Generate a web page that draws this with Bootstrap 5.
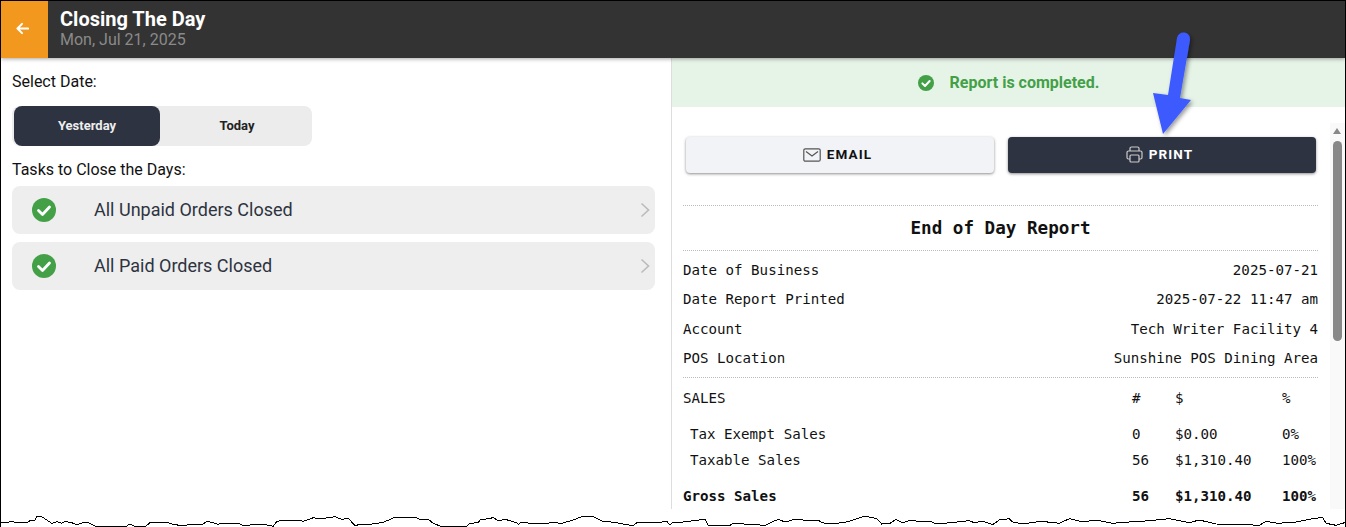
<!DOCTYPE html>
<html lang="en">
<head>
  <meta charset="UTF-8">
  <title>Closing The Day</title>
  <link href="https://cdn.jsdelivr.net/npm/bootstrap@5.3.3/dist/css/bootstrap.min.css" rel="stylesheet">
  <style>
    html, body { height: 100%; overflow: hidden; }
    body { font-family: Roboto, sans-serif; background: #fff; color: #111; }
    .shot { position: relative; height: 527px; border: 1px solid #000; border-bottom: 0; overflow: hidden; }
    .top-bar { height: 57px; background: #333; box-shadow: 0 1px 4px rgba(0,0,0,.35); position: relative; z-index: 2; }
    .back-btn { width: 47px; background: #f3981f; padding: 0 5px 2px 0; }
    .top-heading { margin: 7px 0 0 12px; }
    .top-title { font-size: 20px; font-weight: 700; line-height: 22px; color: #fff; }
    .top-date { font-size: 16px; line-height: 19px; color: #8a8a8a; }
    .left-pane { width: 670px; padding: 14px 11px 0; }
    .pane-label { font-size: 16px; line-height: 19px; }
    .date-switch { width: 300px; height: 40px; background: #ececec; border-radius: 8px; margin: 15px 0 14px; padding: 0 0 0 2px; }
    .date-opt { width: 146px; font-size: 13px; font-weight: 700; line-height: 40px; text-align: center; color: #222; }
    .date-opt-rest { flex: 1; padding-left: 2px; }
    .date-opt-on { background: #2d3340; color: #eee; border-radius: 8px; }
    .tasks-label { margin-bottom: 7px; }
    .task-row { height: 48px; background: #eee; border-radius: 8px; width: 643px; margin-bottom: 8px; padding: 0 5px 0 20px; color: #2d3340; font-size: 18px; }
    .task-name { margin-left: 38px; padding-bottom: 2px; }
    .right-pane { width: 674px; border-left: 1px solid #ddd; position: relative; }
    .done-banner { height: 49px; background: #e6f4e8; color: #43a047; font-weight: 700; font-size: 16px; gap: 16px; }
    .action-row { padding: 30px 0 0 14px; column-gap: 14px; }
    .action-btn { width: 308px; height: 36px; border-radius: 4px; font-size: 13.5px; font-weight: 700; letter-spacing: 1.1px; gap: 6px; padding: 0 5px 1px 0; box-shadow: 0 1px 3px rgba(0,0,0,.45); }
    .btn-pale { background: #f2f3f7; color: #111; }
    .btn-dark { background: #2d3340; color: #fff; }
    .report { width: 635px; margin: 32px 0 0 11px; border-top: 1px dotted #bbb; font-family: "DejaVu Sans Mono", monospace; font-size: 14.15px; color: #111; }
    .report-title { font-size: 17.6px; font-weight: 700; text-align: center; line-height: 45px; height: 45px; color: #111; border-bottom: 1px dotted #bbb; }
    .kv-block { padding: 5px 0 4px; border-bottom: 1px dotted #bbb; }
    .kv { height: 29.3px; line-height: 29.3px; }
    .sales-row { display: flex; white-space: nowrap; height: 26px; line-height: 26px; }
    .sales-head { margin: 7px 0 10px; }
    .sales-name { width: 449px; }
    .sales-count { width: 43px; }
    .sales-amt { width: 107px; }
    .indent { padding-left: 7px; }
    .bold-row { font-weight: 700; margin-top: 10px; }
    .scroll-rail { position: absolute; top: 65px; right: 0; width: 15px; bottom: 0; background: #f9f9f9; }
    .scroll-up { width: 0; height: 0; border: 4.5px solid transparent; border-top: 0; border-bottom: 6px solid #888; margin: 5px 0 0 3px; }
    .scroll-thumb { width: 9px; height: 200px; background: #888; border-radius: 5px; margin: 7px 0 0 3px; }
    .overlay { position: absolute; left: -1px; top: -1px; pointer-events: none; z-index: 5; }
  </style>
</head>
<body>
  <div class="shot">
    <div class="top-bar d-flex">
      <div class="back-btn d-flex align-items-center justify-content-center">
        <svg width="13" height="13" viewBox="0 0 14 14" fill="none" stroke="#fff" stroke-width="2.100" stroke-linecap="round" stroke-linejoin="round"><path d="M1.500 7H13M6.500 2 1.500 7l5 5"/></svg>
      </div>
      <div class="top-heading">
        <div class="top-title">Closing The Day</div>
        <div class="top-date">Mon, Jul 21, 2025</div>
      </div>
    </div>
    <div class="d-flex">
      <div class="left-pane">
        <div class="pane-label">Select Date:</div>
        <div class="date-switch d-flex">
          <div class="date-opt date-opt-on">Yesterday</div>
          <div class="date-opt date-opt-rest">Today</div>
        </div>
        <div class="pane-label tasks-label">Tasks to Close the Days:</div>
        <div class="task-row d-flex align-items-center">
          <svg width="24" height="24" viewBox="0 0 24 24"><circle cx="12" cy="12" r="12" fill="#43a047"/><path d="M6.500 12.500 10.500 16.500 17.500 9" fill="none" stroke="#fff" stroke-width="2.800" stroke-linecap="round" stroke-linejoin="round"/></svg>
          <span class="task-name flex-grow-1">All Unpaid Orders Closed</span>
          <svg width="10" height="16" viewBox="0 0 10 16" fill="none" stroke="#bbb" stroke-width="1.600"><path d="M1.500 1.500 8.500 8 1.500 14.500"/></svg>
        </div>
        <div class="task-row d-flex align-items-center">
          <svg width="24" height="24" viewBox="0 0 24 24"><circle cx="12" cy="12" r="12" fill="#43a047"/><path d="M6.500 12.500 10.500 16.500 17.500 9" fill="none" stroke="#fff" stroke-width="2.800" stroke-linecap="round" stroke-linejoin="round"/></svg>
          <span class="task-name flex-grow-1">All Paid Orders Closed</span>
          <svg width="10" height="16" viewBox="0 0 10 16" fill="none" stroke="#bbb" stroke-width="1.600"><path d="M1.500 1.500 8.500 8 1.500 14.500"/></svg>
        </div>
      </div>
      <div class="right-pane">
        <div class="done-banner d-flex align-items-center justify-content-center">
          <svg width="16" height="16" viewBox="0 0 24 24"><circle cx="12" cy="12" r="12" fill="#43a047"/><path d="M6.500 12.500 10.500 16.500 17.500 9" fill="none" stroke="#fff" stroke-width="3" stroke-linecap="round" stroke-linejoin="round"/></svg>
          <span>Report is completed.</span>
        </div>
        <div class="action-row d-flex">
          <div class="action-btn btn-pale d-flex align-items-center justify-content-center">
            <svg width="18" height="14" viewBox="0 0 18 14" fill="none" stroke="#555" stroke-width="1.200"><rect x=".8" y=".8" width="16.400" height="12.400" rx="1.500"/><path d="M3 3.500 9 8l6-4.500"/></svg>
            <span>EMAIL</span>
          </div>
          <div class="action-btn btn-dark d-flex align-items-center justify-content-center">
            <svg width="17" height="17" viewBox="0 0 17 17" fill="none" stroke="#ccc" stroke-width="1.200"><path d="M4 5V2.500A1.500 1.500 0 0 1 5.500 1h6A1.500 1.500 0 0 1 13 2.500V5M4 13H2.500A1.500 1.500 0 0 1 1 11.500V6.500A1.500 1.500 0 0 1 2.500 5h12A1.500 1.500 0 0 1 16 6.500v5a1.500 1.500 0 0 1-1.500 1.500H13"/><rect x="4" y="9" width="9" height="7" rx="1"/></svg>
            <span>PRINT</span>
          </div>
        </div>
        <div class="report">
          <div class="report-title">End of Day Report</div>
          <div class="kv-block">
            <div class="kv d-flex justify-content-between"><span>Date of Business</span><span>2025-07-21</span></div>
            <div class="kv d-flex justify-content-between"><span>Date Report Printed</span><span>2025-07-22 11:47 am</span></div>
            <div class="kv d-flex justify-content-between"><span>Account</span><span>Tech Writer Facility 4</span></div>
            <div class="kv d-flex justify-content-between"><span>POS Location</span><span>Sunshine POS Dining Area</span></div>
          </div>
          <div class="sales-row sales-head"><span class="sales-name">SALES</span><span class="sales-count">#</span><span class="sales-amt">$</span><span>%</span></div>
          <div class="sales-row"><span class="sales-name indent">Tax Exempt Sales</span><span class="sales-count">0</span><span class="sales-amt">$0.00</span><span>0%</span></div>
          <div class="sales-row"><span class="sales-name indent">Taxable Sales</span><span class="sales-count">56</span><span class="sales-amt">$1,310.40</span><span>100%</span></div>
          <div class="sales-row bold-row"><span class="sales-name">Gross Sales</span><span class="sales-count">56</span><span class="sales-amt">$1,310.40</span><span>100%</span></div>
        </div>
        <div class="scroll-rail">
          <div class="scroll-up"></div>
          <div class="scroll-thumb"></div>
        </div>
      </div>
    </div>
    <svg class="overlay" width="1346" height="527" viewBox="0 0 1346 527">
      <defs><filter id="arrowShade" x="-30%" y="-30%" width="160%" height="160%"><feDropShadow dx="2" dy="2" stdDeviation="2" flood-color="#000" flood-opacity=".4"/></filter></defs>
      <path filter="url(#arrowShade)" fill="#3d5afe" d="M1177 38A6.500 6.500 0 0 1 1190 40L1180 98 1191 100 1163 134 1153 93 1168 95Z"/>
      <path id="tearEdge" fill="#fff" stroke="#000" stroke-width="1" shape-rendering="crispEdges"/>
    </svg>
  </div>
  <script>
    // torn bottom edge, points read off the reference at 3x: [u, v] per crop
    const crops = [
      { x0: 0, y0: 480, pts: [[-6,125],[20,128],[35,124],[50,128],[80,128],[90,122],[105,120],[110,110],[125,110],[140,120],[155,130],[170,125],[185,130],[195,124],[215,128],[230,134],[250,128],[265,128],[285,138],[380,138],[390,132],[405,140],[435,140],[450,128],[500,127],[520,133],[545,137],[580,133],[610,132],[620,124],[640,128],[655,133],[665,129],[715,129],[730,137],[760,134],[790,133],[820,139],[830,125],[845,120],[860,123],[895,120],[910,124],[940,113],[960,117],[1005,110],[1025,118],[1045,115],[1065,137],[1080,133],[1110,133],[1150,127],[1180,114],[1250,113],[1260,118],[1285,118],[1300,130],[1320,138]] },
      { x0: 450, y0: 500, pts: [[0,78],[50,78],[60,70],[85,68],[90,60],[130,53],[145,62],[165,58],[200,68],[205,73],[215,66],[255,72],[310,68],[335,70],[370,60],[395,50],[425,48],[455,63],[500,68],[520,72],[550,77],[560,68],[620,68],[650,64],[660,76],[670,66],[700,66],[765,58],[775,76],[840,76],[850,70],[915,74],[945,76],[975,62],[985,58],[1005,66],[1035,58],[1060,60],[1105,60],[1115,68],[1145,72],[1195,65],[1245,48],[1280,56],[1295,72],[1320,70]] },
      { x0: 896, y0: 500, pts: [[0,58],[20,68],[45,60],[70,65],[105,65],[120,72],[165,68],[220,62],[235,68],[260,64],[290,74],[310,60],[340,56],[350,66],[380,72],[435,64],[490,70],[520,56],[560,66],[600,60],[650,70],[700,66],[760,62],[820,56],[860,64],[880,68],[910,60],[960,72],[1050,74],[1090,76],[1110,64],[1145,70],[1200,66],[1240,58],[1280,52],[1290,70],[1320,76],[1340,70],[1350,66]] }
    ];
    let d = "";
    crops.forEach(c => c.pts.forEach(([u, v]) => {
      d += (d ? "L" : "M") + (c.x0 + u / 3).toFixed(1) + " " + (c.y0 + v / 3).toFixed(1);
    }));
    document.getElementById("tearEdge").setAttribute("d", d + "L1350 530L-3 530Z");
  </script>
</body>
</html>
